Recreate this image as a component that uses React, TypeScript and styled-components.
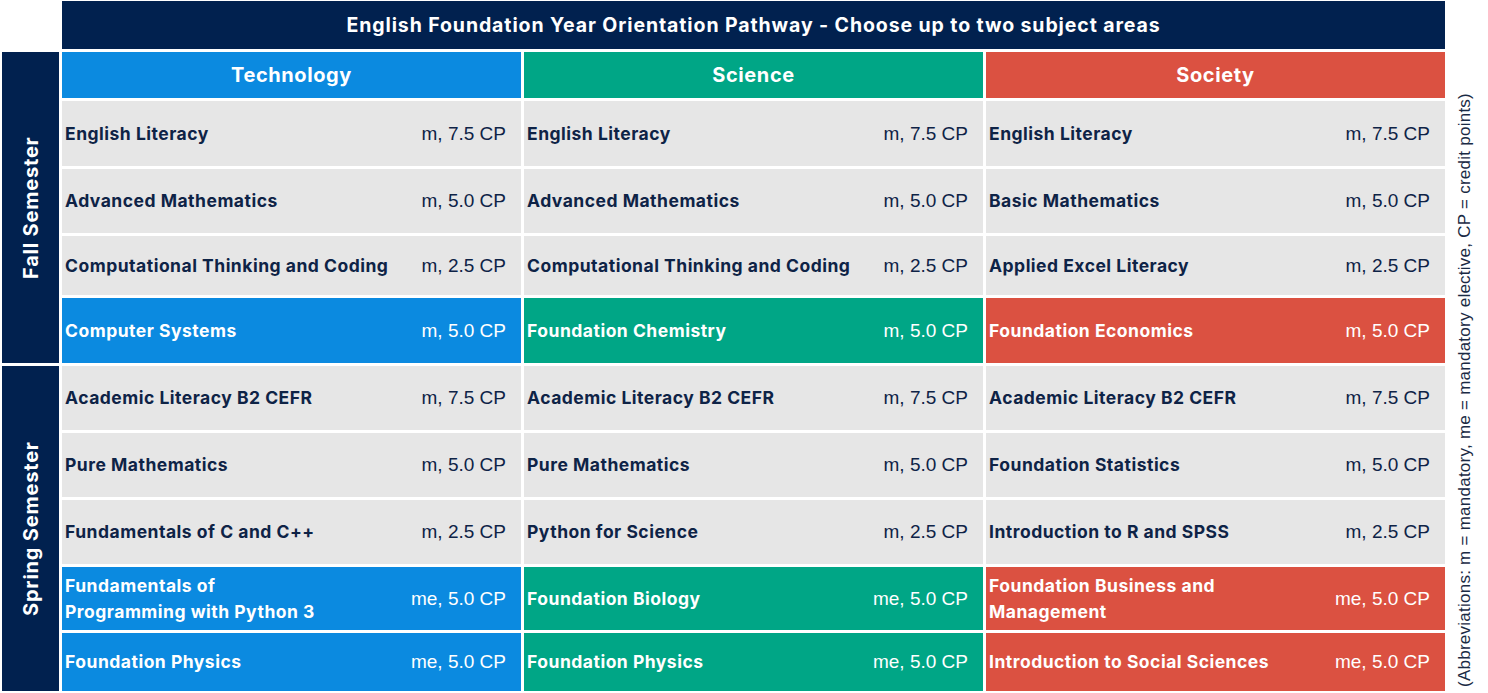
import React from "react";
import styled, { createGlobalStyle } from "styled-components";

const Global = createGlobalStyle`
  html, body { margin: 0; padding: 0; background: #ffffff; }
  body { font-family: Inter, "Liberation Sans", sans-serif; }
`;

const NAVY = "#01214f";
const INK = "#0e2346";
const GRAY = "#e6e6e6";

type Tone = "gray" | "tech" | "sci" | "soc";
const toneBg: Record<Tone, string> = {
  gray: GRAY,
  tech: "#0b8ae0",
  sci: "#00a686",
  soc: "#db5141",
};

const Page = styled.div`
  padding: 1px 0 0 2px;
`;

const Grid = styled.div`
  display: grid;
  grid-template-columns: 57px repeat(3, 459px) 34px;
  grid-template-rows: 48px 46px 65px 64px 59px 65px 64px 64px 64px 63px 58px;
  column-gap: 3px;
  row-gap: 3px;
`;

const Title = styled.div`
  grid-column: 2 / 5;
  grid-row: 1;
  background: ${NAVY};
  color: #fff;
  font-weight: 700;
  font-size: 19.5px;
  letter-spacing: 0.9px;
  display: flex;
  align-items: center;
  justify-content: center;
`;

const Header = styled.div<{ $tone: Tone; $col: number }>`
  grid-row: 2;
  grid-column: ${(p) => p.$col};
  background: ${(p) => toneBg[p.$tone]};
  color: #fff;
  font-weight: 700;
  font-size: 20px;
  letter-spacing: 0.6px;
  display: flex;
  align-items: center;
  justify-content: center;
`;

const SemesterLabel = styled.div<{ $start: number; $end: number }>`
  grid-column: 1;
  grid-row: ${(p) => `${p.$start} / ${p.$end}`};
  background: ${NAVY};
  color: #fff;
  font-weight: 700;
  font-size: 20px;
  letter-spacing: 0.8px;
  display: flex;
  align-items: center;
  justify-content: center;
  writing-mode: vertical-rl;
  transform: rotate(180deg);
`;

const Note = styled.div`
  grid-column: 5;
  grid-row: 2 / 12;
  display: flex;
  align-items: center;
  justify-content: flex-start;
  writing-mode: vertical-rl;
  transform: rotate(180deg);
  font-family: "Liberation Sans", Arial, sans-serif;
  font-size: 17px;
  letter-spacing: 0.25px;
  color: #1a2a44;
  padding-top: 4px;
  white-space: nowrap;
`;

const Cell = styled.div<{ $tone: Tone }>`
  background: ${(p) => toneBg[p.$tone]};
  color: ${(p) => (p.$tone === "gray" ? INK : "#fff")};
  display: flex;
  align-items: center;
  justify-content: space-between;
  padding: 0 15px 0 3px;
`;

const Name = styled.span`
  font-weight: 700;
  font-size: 17.5px;
  letter-spacing: 0.5px;
  line-height: 26px;
`;

const Credit = styled.span`
  font-family: "Liberation Sans", Arial, sans-serif;
  font-size: 19px;
  white-space: nowrap;
`;

type Row = { name: string[]; credit: string; tone: Tone }[];

const rows: Row[] = [
  [
    { name: ["English Literacy"], credit: "m, 7.5 CP", tone: "gray" },
    { name: ["English Literacy"], credit: "m, 7.5 CP", tone: "gray" },
    { name: ["English Literacy"], credit: "m, 7.5 CP", tone: "gray" },
  ],
  [
    { name: ["Advanced Mathematics"], credit: "m, 5.0 CP", tone: "gray" },
    { name: ["Advanced Mathematics"], credit: "m, 5.0 CP", tone: "gray" },
    { name: ["Basic Mathematics"], credit: "m, 5.0 CP", tone: "gray" },
  ],
  [
    { name: ["Computational Thinking and Coding"], credit: "m, 2.5 CP", tone: "gray" },
    { name: ["Computational Thinking and Coding"], credit: "m, 2.5 CP", tone: "gray" },
    { name: ["Applied Excel Literacy"], credit: "m, 2.5 CP", tone: "gray" },
  ],
  [
    { name: ["Computer Systems"], credit: "m, 5.0 CP", tone: "tech" },
    { name: ["Foundation Chemistry"], credit: "m, 5.0 CP", tone: "sci" },
    { name: ["Foundation Economics"], credit: "m, 5.0 CP", tone: "soc" },
  ],
  [
    { name: ["Academic Literacy B2 CEFR"], credit: "m, 7.5 CP", tone: "gray" },
    { name: ["Academic Literacy B2 CEFR"], credit: "m, 7.5 CP", tone: "gray" },
    { name: ["Academic Literacy B2 CEFR"], credit: "m, 7.5 CP", tone: "gray" },
  ],
  [
    { name: ["Pure Mathematics"], credit: "m, 5.0 CP", tone: "gray" },
    { name: ["Pure Mathematics"], credit: "m, 5.0 CP", tone: "gray" },
    { name: ["Foundation Statistics"], credit: "m, 5.0 CP", tone: "gray" },
  ],
  [
    { name: ["Fundamentals of C and C++"], credit: "m, 2.5 CP", tone: "gray" },
    { name: ["Python for Science"], credit: "m, 2.5 CP", tone: "gray" },
    { name: ["Introduction to R and SPSS"], credit: "m, 2.5 CP", tone: "gray" },
  ],
  [
    { name: ["Fundamentals of", "Programming with Python 3"], credit: "me, 5.0 CP", tone: "tech" },
    { name: ["Foundation Biology"], credit: "me, 5.0 CP", tone: "sci" },
    { name: ["Foundation Business and", "Management"], credit: "me, 5.0 CP", tone: "soc" },
  ],
  [
    { name: ["Foundation Physics"], credit: "me, 5.0 CP", tone: "tech" },
    { name: ["Foundation Physics"], credit: "me, 5.0 CP", tone: "sci" },
    { name: ["Introduction to Social Sciences"], credit: "me, 5.0 CP", tone: "soc" },
  ],
];

export default function App() {
  return (
    <Page>
      <Global />
      <Grid>
        <Title>English Foundation Year Orientation Pathway - Choose up to two subject areas</Title>
        <SemesterLabel $start={2} $end={7}>Fall Semester</SemesterLabel>
        <SemesterLabel $start={7} $end={12}>Spring Semester</SemesterLabel>
        <Header $tone="tech" $col={2}>Technology</Header>
        <Header $tone="sci" $col={3}>Science</Header>
        <Header $tone="soc" $col={4}>Society</Header>
        <Note>(Abbreviations: m = mandatory, me = mandatory elective, CP = credit points)</Note>
        {rows.map((row, ri) =>
          row.map((c, ci) => (
            <Cell key={`${ri}-${ci}`} $tone={c.tone} style={{ gridRow: ri + 3, gridColumn: ci + 2 }}>
              <Name>
                {c.name.map((l, li) => (
                  <React.Fragment key={li}>
                    {li > 0 && <br />}
                    {l}
                  </React.Fragment>
                ))}
              </Name>
              <Credit>{c.credit}</Credit>
            </Cell>
          ))
        )}
      </Grid>
    </Page>
  );
}
